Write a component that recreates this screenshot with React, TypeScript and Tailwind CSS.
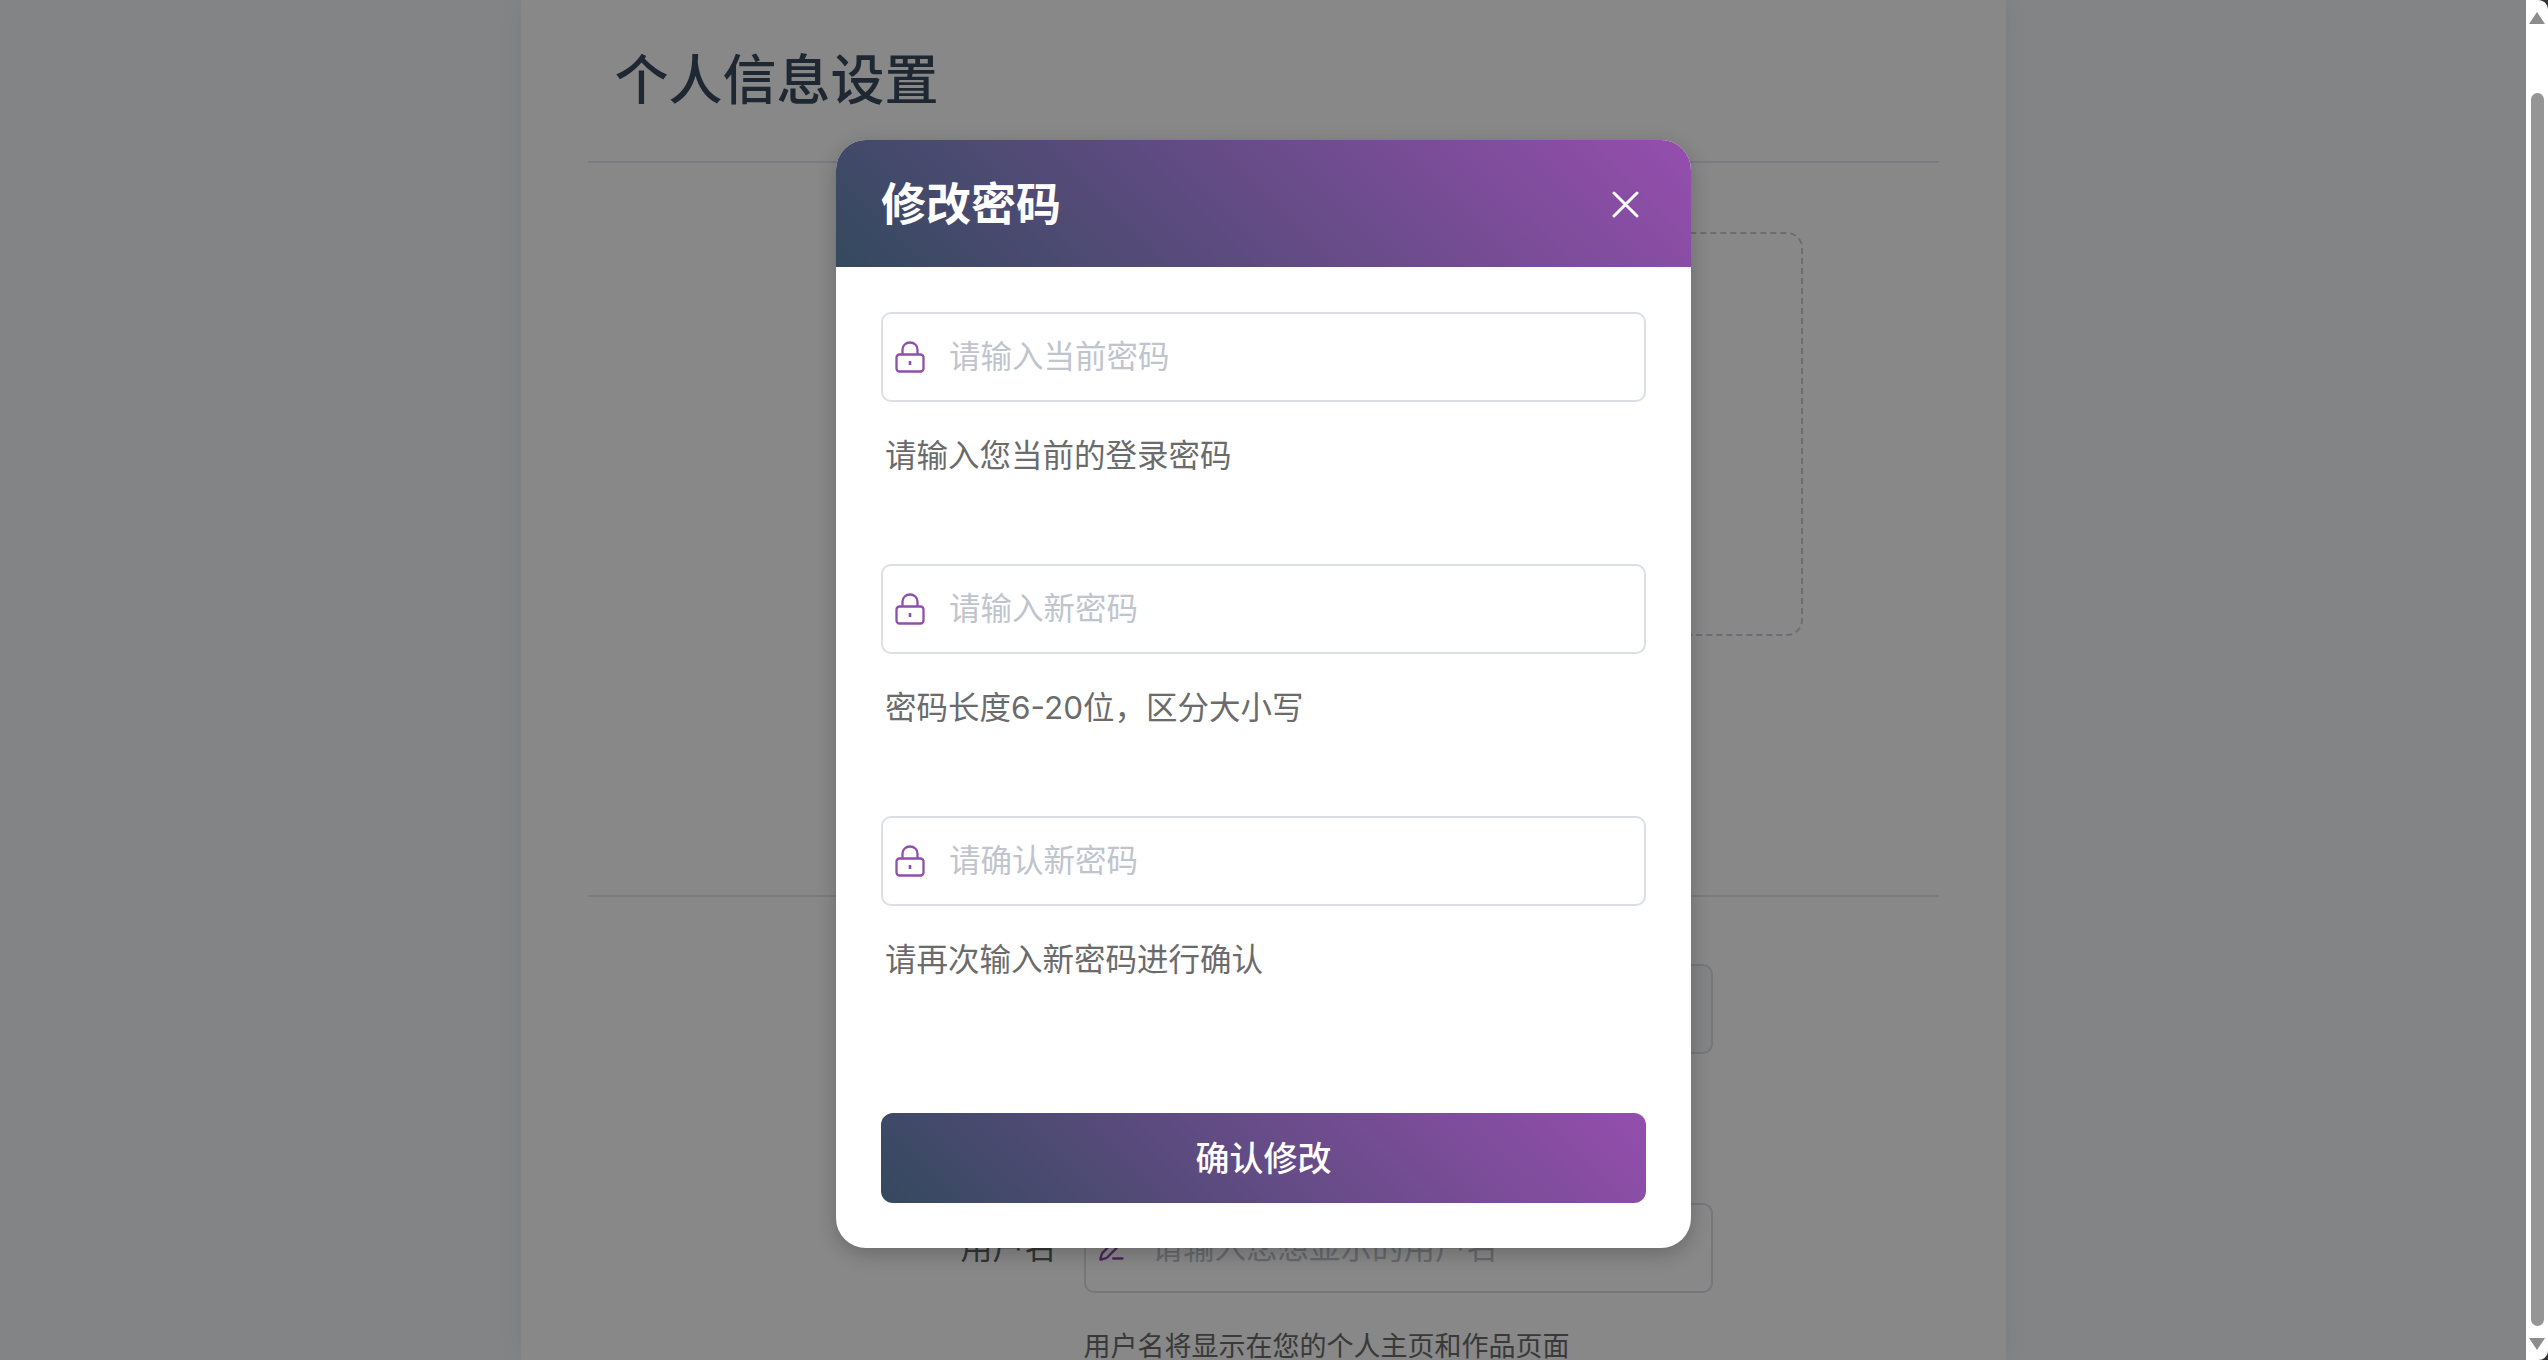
import React from 'react';
import { PenLine } from 'lucide-react';

const fontStack = "font-['Inter','Noto_Sans_CJK_SC',sans-serif]";

const LockIcon: React.FC = () => (
  <svg width="30" height="32" viewBox="0 0 30 32" fill="none" stroke="#9050aa" strokeWidth="2.300" className="shrink-0">
    <path d="M7.500 14V8.500C7.500 4.500 10.800 1.500 15 1.500C19.200 1.500 22.500 4.500 22.500 8.500V14" />
    <rect x="1.500" y="13.500" width="27" height="17" rx="3" />
    <path d="M15 20V24" strokeWidth="2.600" />
  </svg>
);

const CloseIcon: React.FC = () => (
  <svg width="27" height="27" viewBox="0 0 27 27" fill="none" stroke="#ffffff" strokeWidth="3" strokeLinecap="round">
    <path d="M2 2L25 25M25 2L2 25" />
  </svg>
);

const PasswordField: React.FC<{ placeholder: string; hint: string; last?: boolean }> = ({ placeholder, hint, last }) => (
  <div className={last ? 'mb-[131px]' : 'mb-[86px]'}>
    <div className="flex h-[90px] items-center gap-[24px] rounded-[10px] border-2 border-[#dcdfe6] bg-white pl-[12px] pr-4">
      <LockIcon />
      <input
        placeholder={placeholder}
        className="min-w-0 flex-1 bg-transparent text-[31.5px] text-[#606266] outline-none placeholder:text-[#c0c4cc]"
      />
    </div>
    <p className="mt-[32px] pl-[4px] text-[31.5px] leading-[44px] text-[#6b6b6b]">{hint}</p>
  </div>
);

const ChangePasswordDialog: React.FC = () => (
  <div className="absolute inset-0 flex items-start justify-center bg-black/[0.467] pl-[1px] pt-[140px]">
    <div className="w-[855px] overflow-hidden rounded-[30px] bg-white shadow-[0_6px_20px_rgba(0,0,0,0.22)]">
      <div className="flex h-[127px] items-center justify-between bg-[linear-gradient(45deg,#34495e,#954eae)] pl-[45px] pr-[52px]">
        <h2 className="translate-y-[1px] text-[45px] font-semibold text-white">修改密码</h2>
        <button type="button" className="flex translate-y-[1px]">
          <CloseIcon />
        </button>
      </div>
      <div className="px-[45px] pt-[45px] pb-[45px]">
        <PasswordField placeholder="请输入当前密码" hint="请输入您当前的登录密码" />
        <PasswordField placeholder="请输入新密码" hint="密码长度6-20位，区分大小写" />
        <PasswordField placeholder="请确认新密码" hint="请再次输入新密码进行确认" last />
        <button
          type="button"
          className="flex h-[90px] w-full items-center justify-center rounded-[12px] bg-[linear-gradient(45deg,#34495e,#954eae)] text-[34px] font-medium text-white"
        >
          确认修改
        </button>
      </div>
    </div>
  </div>
);

const ProfilePage: React.FC = () => (
  <div className="mx-auto h-full w-[1485px] overflow-hidden bg-white px-[67px] shadow-[0_0_24px_rgba(0,0,0,0.06)]">
    <div className="flex h-[163px] items-center border-b-2 border-[#e4e7ed] pl-[27px]">
      <h1 className="text-[54px] font-medium text-[#3a4c5f]">个人信息设置</h1>
    </div>

    <div className="h-[732px] pl-[496px] pt-[69px]">
      <div className="h-[404px] w-[719px] rounded-[16px] border-2 border-dashed border-[#c8ccd4]" />
    </div>

    <div className="border-t-2 border-[#e4e7ed] pl-[496px] pt-[67px]">
      <div className="h-[90px] w-[629px] rounded-[10px] border-2 border-[#dcdfe6] bg-[#f5f7fa]" />
    </div>

    <div className="mt-[149px] flex items-center">
      <label className="w-[469px] text-right text-[32px] text-[#606266]">用户名</label>
      <div className="ml-[27px] flex h-[90px] w-[629px] items-center gap-[26px] rounded-[10px] border-2 border-[#dcdfe6] pl-[12px]">
        <PenLine size={28} color="#8e44ad" />
        <input
          placeholder="请输入您想显示的用户名"
          className="min-w-0 flex-1 bg-transparent text-[31.5px] outline-none placeholder:text-[#c0c4cc]"
        />
      </div>
    </div>
    <p className="mt-[32px] pl-[496px] text-[27px] leading-[44px] text-[#6b6b6b]">用户名将显示在您的个人主页和作品页面</p>
  </div>
);

const ScrollBar: React.FC = () => (
  <div className="relative flex w-[22px] shrink-0 flex-col items-center bg-white">
    <svg width="16" height="12" viewBox="0 0 16 12" className="mt-[12px] shrink-0">
      <path d="M8 0L16 12H0Z" fill="#8c8c8c" />
    </svg>
    <div className="mt-[69px] h-[1233px] w-[13px] rounded-full bg-[#959595]" />
    <svg width="16" height="12" viewBox="0 0 16 12" className="mt-[12px] shrink-0">
      <path d="M8 12L16 0H0Z" fill="#8c8c8c" />
    </svg>
    {/* window corners */}
    <svg width="10" height="10" viewBox="0 0 10 10" className="absolute right-0 top-0">
      <path d="M0 0H10V10C10 4 6 0 0 0Z" fill="#333333" />
    </svg>
    <svg width="10" height="10" viewBox="0 0 10 10" className="absolute bottom-0 right-0">
      <path d="M0 10H10V0C10 6 6 10 0 10Z" fill="#333333" />
    </svg>
  </div>
);

const App: React.FC = () => (
  <div className={`flex h-[1360px] w-full overflow-hidden bg-[#f5f7fa] ${fontStack}`}>
    <div className="relative min-w-0 flex-1">
      <ProfilePage />
      <ChangePasswordDialog />
    </div>
    <ScrollBar />
  </div>
);

export default App;
